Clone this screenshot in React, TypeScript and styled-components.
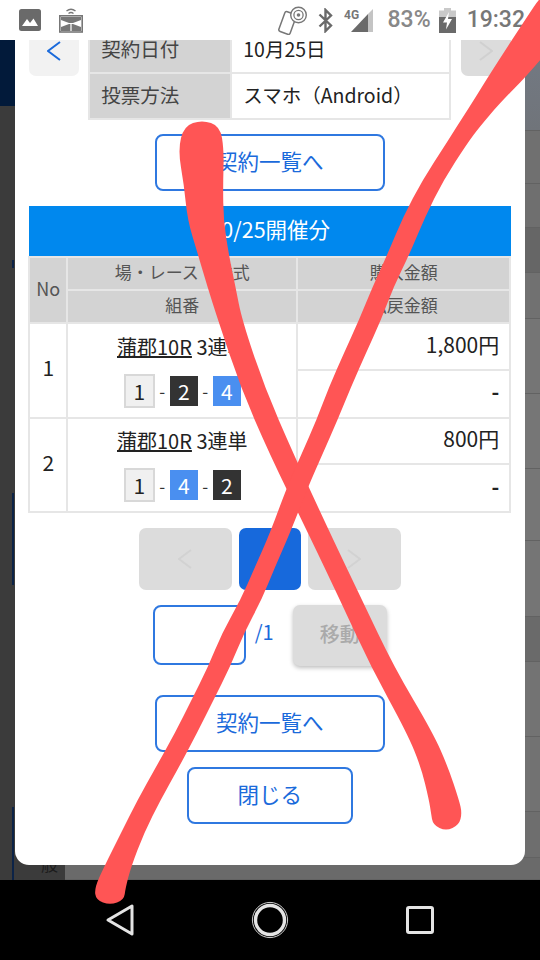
import React from 'react';
import styled, { createGlobalStyle } from 'styled-components';

const GlobalStyle = createGlobalStyle`
    html, body {
        margin: 0;
        padding: 0;
        background: #000;
    }
    * {
        box-sizing: border-box;
    }
    body {
        font-family: "Noto Sans CJK JP", "Noto Sans", sans-serif;
    }
`;

const Screen = styled.div`
    position: relative;
    width: 540px;
    height: 960px;
    overflow: hidden;
    display: flex;
    flex-direction: column;
`;

const StatusBar = styled.div`
    height: 40px;
    background: #fff;
    display: flex;
    align-items: center;
    justify-content: space-between;
    padding: 0 15px 0 19px;
    position: relative;
    z-index: 2;
`;

const StatusGroup = styled.div`
    display: flex;
    align-items: center;
    gap: 18px;
`;

const StatusRight = styled.div`
    display: flex;
    align-items: center;
    gap: 11px;
`;

const StatusText = styled.span<{ $ml?: number; $color: string }>`
    font-family: Roboto, "Noto Sans", sans-serif;
    font-size: 23px;
    font-weight: 500;
    line-height: 40px;
    color: ${({ $color }) => $color};
    margin-left: ${({ $ml }) => $ml || 0}px;
    margin-right: ${({ $ml }) => ($ml ? -3 : 0)}px;
`;

const Stage = styled.div`
    position: relative;
    height: 840px;
    overflow: hidden;
`;

const Backdrop = styled.div`
    height: 100%;
    display: flex;
`;

const LeftColumn = styled.div`
    width: 65px;
    display: flex;
    flex-direction: column;
    background: #3b3b3b;
`;

const LeftRow = styled.div<{ $h: number; $navy?: boolean; $mark?: boolean }>`
    height: ${({ $h }) => $h}px;
    position: relative;
    background: ${({ $navy, $mark }) =>
        $navy
            ? '#021a3a'
            : $mark
              ? 'linear-gradient(to right, transparent 12px, #0c2347 12px, #0c2347 14px, transparent 14px)'
              : 'none'};
`;

const HiddenLabel = styled.span`
    position: absolute;
    right: 7px;
    bottom: 5px;
    font-size: 17px;
    line-height: 22px;
    color: #1c1c1c;
`;

const RightColumn = styled.div`
    flex: 1;
    display: flex;
    flex-direction: column;
`;

const RightRow = styled.div<{ $h: number; $tone: string }>`
    height: ${({ $h }) => $h}px;
    background: ${({ $tone }) => $tone};
    border-bottom: 1px solid #626262;
`;

const Modal = styled.div`
    position: absolute;
    left: 14.5px;
    bottom: 15px;
    width: 510.5px;
    background: #fff;
    border-radius: 0 0 14px 14px;
    padding: 0 14.5px 41px;
    display: flex;
    flex-direction: column;
    align-items: center;
`;

const TopRow = styled.div`
    width: 100%;
    display: flex;
    align-items: flex-start;
    justify-content: space-between;
`;

const SideButton = styled.div<{ $disabled?: boolean }>`
    width: 50px;
    height: 50px;
    border-radius: 7px;
    background: ${({ $disabled }) => ($disabled ? '#dcdcdc' : '#f2f2f2')};
    display: flex;
    align-items: center;
    justify-content: center;
`;

const InfoTable = styled.table`
    width: 363px;
    border-collapse: collapse;
    table-layout: fixed;
    font-size: 19.5px;
    td, th {
        border: 2px solid #e6e6e6;
        padding: 0 11px 4px;
        text-align: left;
        font-weight: 400;
    }
    th {
        width: 142px;
        background: #d3d3d3;
        color: #444;
    }
    td {
        color: #222;
    }
    tr:first-child td, tr:first-child th {
        border-top: none;
        height: 47px;
        padding-bottom: 1px;
    }
    tr:last-child td, tr:last-child th {
        height: 46px;
    }
`;

const OutlineButton = styled.div<{ $w: number; $mt: number }>`
    width: ${({ $w }) => $w}px;
    height: 57px;
    margin-top: ${({ $mt }) => $mt}px;
    padding-bottom: 4px;
    border: 2px solid #2f78e0;
    border-radius: 8px;
    display: flex;
    align-items: center;
    justify-content: center;
    color: #1a6adb;
    font-size: 21.5px;
`;

const Band = styled.div`
    width: 100%;
    height: 50px;
    margin-top: 15px;
    padding-bottom: 6px;
    background: #0088ee;
    color: #fff;
    font-size: 21.5px;
    display: flex;
    align-items: center;
    justify-content: center;
`;

const ResultTable = styled.table`
    width: 100%;
    border-collapse: collapse;
    table-layout: fixed;
    border: 2px solid #e6e6e6;
    td, th {
        border: 2px solid #e6e6e6;
        padding: 0;
        text-align: center;
        font-weight: 400;
    }
    th {
        background: #d3d3d3;
        color: #555;
        font-size: 17px;
        height: 33px;
        padding-bottom: 5px;
    }
    td {
        color: #222;
        font-size: 20px;
    }
`;

const NoHead = styled.th`
    && {
        font-size: 18px;
    }
`;

const RowNo = styled.td`
    && {
        padding-bottom: 6px;
        font-size: 21px;
    }
`;

const Price = styled.td<{ $h: number }>`
    && {
        height: ${({ $h }) => $h}px;
        text-align: right;
        padding: 0 10px 5px 0;
        font-size: 21px;
    }
`;

const EmptyPrice = styled(Price)`
    && {
        font-weight: 700;
    }
`;

const RaceCell = styled.div`
    display: flex;
    flex-direction: column;
    align-items: center;
    gap: 13px;
`;

const RaceTitle = styled.span`
    line-height: 28px;
    font-size: 20px;
`;

const RaceName = styled.span`
    text-decoration: underline;
`;

const Combo = styled.div`
    display: flex;
    align-items: center;
    height: 34px;
`;

const ComboDash = styled.span`
    width: 15px;
    text-align: center;
    font-size: 17px;
    color: #333;
`;

const Boat = styled.span<{ $kind: 'white' | 'black' | 'blue' }>`
    width: ${({ $kind }) => ($kind === 'white' ? 31 : 28)}px;
    height: ${({ $kind }) => ($kind === 'white' ? 34 : 30)}px;
    display: flex;
    align-items: center;
    justify-content: center;
    font-size: 21px;
    border: ${({ $kind }) => ($kind === 'white' ? '2px solid #d8d8d8' : 'none')};
    background: ${({ $kind }) => ($kind === 'white' ? '#f0f0f0' : $kind === 'black' ? '#333' : '#4a8ff0')};
    color: ${({ $kind }) => ($kind === 'white' ? '#222' : '#fff')};
`;

const Pager = styled.div`
    display: flex;
    gap: 7px;
    margin-top: 15px;
`;

const PageButton = styled.div<{ $active?: boolean }>`
    width: ${({ $active }) => ($active ? 62 : 93)}px;
    height: 62px;
    border-radius: 7px;
    background: ${({ $active }) => ($active ? '#1769dc' : '#dcdcdc')};
    display: flex;
    align-items: center;
    justify-content: center;
`;

const JumpRow = styled.div`
    display: flex;
    align-items: flex-start;
    margin-top: 15px;
    height: 61px;
`;

const PageInput = styled.div`
    width: 93px;
    height: 60px;
    border: 2px solid #2f78e0;
    border-radius: 8px;
`;

const PageTotal = styled.span`
    width: 17px;
    margin: 12px 21px 0 9px;
    color: #1a6adb;
    font-size: 20px;
`;

const JumpButton = styled.div`
    width: 94px;
    height: 61px;
    padding-bottom: 4px;
    border-radius: 7px;
    background: #dcdcdc;
    box-shadow: 0 2px 4px rgba(0, 0, 0, 0.25);
    color: #aaa;
    font-size: 20px;
    font-weight: 500;
    display: flex;
    align-items: center;
    justify-content: center;
`;

const NavBar = styled.div`
    height: 80px;
    background: #000;
    display: flex;
    align-items: center;
    justify-content: center;
`;

const NavCell = styled.div`
    width: 150px;
    display: flex;
    justify-content: center;
`;

const Scribble = styled.svg`
    position: absolute;
    top: 0;
    left: 0;
    z-index: 5;
    pointer-events: none;
`;

const Chevron = ({ dir, color, sw = 2 }: { dir: 'left' | 'right'; color: string; sw?: number }) => (
    <svg width="14" height="20" viewBox="0 0 14 20">
        <polyline
            points={dir === 'left' ? '13,1 1,10 13,19' : '1,1 13,10 1,19'}
            fill="none"
            stroke={color}
            strokeWidth={sw}
        />
    </svg>
);

const GalleryIcon = () => (
    <svg width="22" height="22" viewBox="0 0 22 22">
        <rect width="22" height="22" rx="2.5" fill="#6a6a6a" />
        <path d="M3 17 L8 10 L11 14 L14.5 9.5 L19 17 Z" fill="#fff" />
    </svg>
);

const RoadIcon = () => (
    <svg width="24" height="26" viewBox="0 0 24 26">
        <path d="M7.5 4 Q12 0.5 16.5 4 M9.5 6.5 Q12 4.5 14.5 6.5" fill="none" stroke="#777" strokeWidth="1.4" />
        <rect x="0.8" y="8.8" width="22.4" height="16.2" fill="#fff" stroke="#777" strokeWidth="1.6" />
        <path d="M2 10 L22 10 L22 13 L14 16 L10 16 L2 13 Z" fill="#777" />
        <path d="M10 17 L2 20 L2 24 L22 24 L22 20 L14 17 Z" fill="#777" />
        <path d="M12 17 L12 24" stroke="#fff" strokeWidth="1.2" />
    </svg>
);

const NfcPhoneIcon = () => (
    <svg width="29" height="29" viewBox="0 0 29 29">
        <rect x="3.5" y="6.5" width="12" height="21" rx="2" transform="rotate(20 9.5 17)" fill="#fff" stroke="#777" strokeWidth="1.5" />
        <circle cx="20.5" cy="9" r="7.8" fill="#fff" stroke="#777" strokeWidth="1.4" />
        <circle cx="20.5" cy="9" r="4.6" fill="none" stroke="#777" strokeWidth="1.3" />
        <circle cx="20.5" cy="9" r="1.8" fill="#777" />
    </svg>
);

const BluetoothIcon = () => (
    <svg width="15" height="25" viewBox="0 0 15 25">
        <path d="M1.5 6.5 L13 17.5 L7.5 23 L7.5 2 L13 7.5 L1.5 18.5" fill="none" stroke="#6a6a6a" strokeWidth="2.4" />
    </svg>
);

const SignalIcon = () => (
    <svg width="29" height="24" viewBox="0 0 29 24">
        <path d="M7 24 L24 6 L24 24 Z" fill="#6a6a6a" />
        <path d="M24 6 L29 1 L29 24 L24 24 Z" fill="#c4c4c4" />
        <text x="0" y="11" fontFamily="Roboto, sans-serif" fontSize="12" fontWeight="700" fill="#777">4G</text>
    </svg>
);

const BatteryIcon = () => (
    <svg width="17" height="25" viewBox="0 0 17 25">
        <path d="M5 0 H12 V2.5 H17 V10 H0 V2.5 H5 Z" fill="#c9c9c9" />
        <rect y="9" width="17" height="16" fill="#6a6a6a" />
        <path d="M10 4 L4 14.5 H8 L7 21.5 L13 11 H9 Z" fill="#fff" />
    </svg>
);

const BackIcon = () => (
    <svg width="30" height="34" viewBox="0 0 30 34">
        <path d="M27 3 L27 31 L3 17 Z" fill="none" stroke="#e4e4e4" strokeWidth="3" strokeLinejoin="round" />
    </svg>
);

const HomeIcon = () => (
    <svg width="38" height="38" viewBox="0 0 38 38">
        <circle cx="19" cy="19" r="14.5" fill="none" stroke="#e4e4e4" strokeWidth="3.4" />
        <circle cx="19" cy="19" r="17.6" fill="none" stroke="#e4e4e4" strokeWidth="0.9" />
    </svg>
);

const RecentsIcon = () => (
    <svg width="28" height="28" viewBox="0 0 28 28">
        <rect x="1.5" y="1.5" width="25" height="25" rx="1.5" fill="none" stroke="#e4e4e4" strokeWidth="3" />
    </svg>
);

// marker stroke: centre line as [y, x, width], with a cap point list on each end
const markerOutline = (line: number[][], startCap: number[][], endCap: number[][]) => {
    const right = line.map(([y, x, w]) => [x + w / 2, y]);
    const left = line.map(([y, x, w]) => [x - w / 2, y]).reverse();
    const pts = [...startCap, ...right, ...endCap, ...left];
    const mid = (a: number[], b: number[]) => [(a[0] + b[0]) / 2, (a[1] + b[1]) / 2];
    const start = mid(pts[pts.length - 1], pts[0]);
    let d = `M${start[0]} ${start[1]}`;
    pts.forEach((p, i) => {
        const m = mid(p, pts[(i + 1) % pts.length]);
        d += ` Q${p[0]} ${p[1]} ${m[0]} ${m[1]}`;
    });
    return d + ' Z';
};

const strokeDown = markerOutline(
    [
        [150, 201, 46], [185, 203.5, 39], [220, 205.5, 36], [253, 213, 31], [287, 221.5, 28], [320, 230, 24],
        [387, 252.5, 24], [453, 281, 24], [533, 319, 22], [600, 351, 22], [667, 382.5, 23], [733, 420, 26],
        [767, 434.5, 27], [800, 444, 30], [813, 446.5, 31],
    ],
    [[184, 126], [202, 120], [220, 126]],
    [[459, 825], [446, 831], [433, 825]],
);

const strokeUp = markerOutline(
    [
        [-10, 570, 50], [23, 547, 48], [73, 510, 39], [103, 486, 28], [127, 468, 23], [143, 457, 21], [180, 433, 21],
        [217, 414, 22], [253, 399, 22], [287, 383, 21], [320, 370, 22], [353, 355, 22], [387, 340, 22],
        [420, 327, 21], [453, 312.5, 21], [487, 297.5, 21], [533, 280, 20], [567, 265, 20], [600, 251, 21],
        [633, 233, 22], [667, 219, 22], [700, 202.5, 22], [733, 186, 22], [767, 167.5, 23], [800, 149, 23],
        [833, 132.5, 23], [867, 117.5, 27], [888, 110, 31],
    ],
    [[575, -20], [565, -20]],
    [[124, 900], [110, 905], [96, 900]],
);

const leftRows = [
    { h: 66, navy: true },
    { h: 154 },
    { h: 8, mark: true },
    { h: 225 },
    { h: 92, mark: true },
    { h: 222 },
];

const rightRows = [
    { h: 91, tone: 'linear-gradient(#737a84, #70747a)' },
    { h: 53, tone: '#707070' },
    { h: 44, tone: '#6f6f6f' },
    { h: 45, tone: '#666' },
    { h: 46, tone: '#717171' },
    { h: 75, tone: '#757575' },
    { h: 75, tone: '#767676' },
    { h: 72, tone: '#767676' },
    { h: 76, tone: '#757575' },
    { h: 45, tone: '#6a6a6a' },
    { h: 75, tone: '#737373' },
    { h: 75, tone: '#727272' },
    { h: 46, tone: '#6e6e6e' },
    { h: 22, tone: '#6a6a6a' },
];

type BoatKind = 'white' | 'black' | 'blue';

const RaceRow = ({ no, price, boats }: { no: number; price: string; boats: [string, BoatKind][] }) => (
    <>
        <tr>
            <RowNo rowSpan={2}>{no}</RowNo>
            <td rowSpan={2}>
                <RaceCell>
                    <RaceTitle><RaceName>蒲郡10R</RaceName> 3連単</RaceTitle>
                    <Combo>
                        {boats.map(([n, kind], i) => (
                            <React.Fragment key={n}>
                                {i > 0 && <ComboDash>-</ComboDash>}
                                <Boat $kind={kind}>{n}</Boat>
                            </React.Fragment>
                        ))}
                    </Combo>
                </RaceCell>
            </td>
            <Price $h={46.5}>{price}</Price>
        </tr>
        <tr>
            <EmptyPrice $h={48}>-</EmptyPrice>
        </tr>
    </>
);

const App = () => {
    return (
        <Screen>
            <GlobalStyle />
            <StatusBar>
                <StatusGroup>
                    <GalleryIcon />
                    <RoadIcon />
                </StatusGroup>
                <StatusRight>
                    <NfcPhoneIcon />
                    <BluetoothIcon />
                    <SignalIcon />
                    <StatusText $ml={4} $color="#888">83%</StatusText>
                    <BatteryIcon />
                    <StatusText $color="#777">19:32</StatusText>
                </StatusRight>
            </StatusBar>
            <Stage>
                <Backdrop>
                    <LeftColumn>
                        {leftRows.map((r, i) => (
                            <LeftRow key={i} $h={r.h} $navy={r.navy} $mark={r.mark} />
                        ))}
                        <LeftRow $h={73} $mark>
                            <HiddenLabel>一般</HiddenLabel>
                        </LeftRow>
                    </LeftColumn>
                    <RightColumn>
                        {rightRows.map((r, i) => (
                            <RightRow key={i} $h={r.h} $tone={r.tone} />
                        ))}
                    </RightColumn>
                </Backdrop>
                <Modal>
                    <TopRow>
                        <SideButton><Chevron dir="left" color="#1a6adb" /></SideButton>
                        <InfoTable>
                            <tbody>
                                <tr>
                                    <th>契約日付</th>
                                    <td>10月25日</td>
                                </tr>
                                <tr>
                                    <th>投票方法</th>
                                    <td>スマホ（Android）</td>
                                </tr>
                            </tbody>
                        </InfoTable>
                        <SideButton $disabled><Chevron dir="right" color="#d0d0d0" /></SideButton>
                    </TopRow>
                    <OutlineButton $w={230} $mt={14}>契約一覧へ</OutlineButton>
                    <Band>10/25開催分</Band>
                    <ResultTable>
                        <colgroup>
                            <col width="38" />
                            <col width="230" />
                            <col width="213" />
                        </colgroup>
                        <thead>
                            <tr>
                                <NoHead rowSpan={2}>No</NoHead>
                                <th>場・レース・勝式</th>
                                <th>購入金額</th>
                            </tr>
                            <tr>
                                <th>組番</th>
                                <th>払戻金額</th>
                            </tr>
                        </thead>
                        <tbody>
                            <RaceRow no={1} price="1,800円" boats={[['1', 'white'], ['2', 'black'], ['4', 'blue']]} />
                            <RaceRow no={2} price="800円" boats={[['1', 'white'], ['4', 'blue'], ['2', 'black']]} />
                        </tbody>
                    </ResultTable>
                    <Pager>
                        <PageButton><Chevron dir="left" color="#d2d2d2" /></PageButton>
                        <PageButton $active />
                        <PageButton><Chevron dir="right" color="#d2d2d2" /></PageButton>
                    </Pager>
                    <JumpRow>
                        <PageInput />
                        <PageTotal>/1</PageTotal>
                        <JumpButton>移動</JumpButton>
                    </JumpRow>
                    <OutlineButton $w={230} $mt={29}>契約一覧へ</OutlineButton>
                    <OutlineButton $w={166} $mt={15}>閉じる</OutlineButton>
                </Modal>
            </Stage>
            <NavBar>
                <NavCell><BackIcon /></NavCell>
                <NavCell><HomeIcon /></NavCell>
                <NavCell><RecentsIcon /></NavCell>
            </NavBar>
            <Scribble width="540" height="960" viewBox="0 0 540 960">
                <path d={strokeDown} fill="#ff5555" />
                <path d={strokeUp} fill="#ff5555" />
            </Scribble>
        </Screen>
    );
};

export default App;
